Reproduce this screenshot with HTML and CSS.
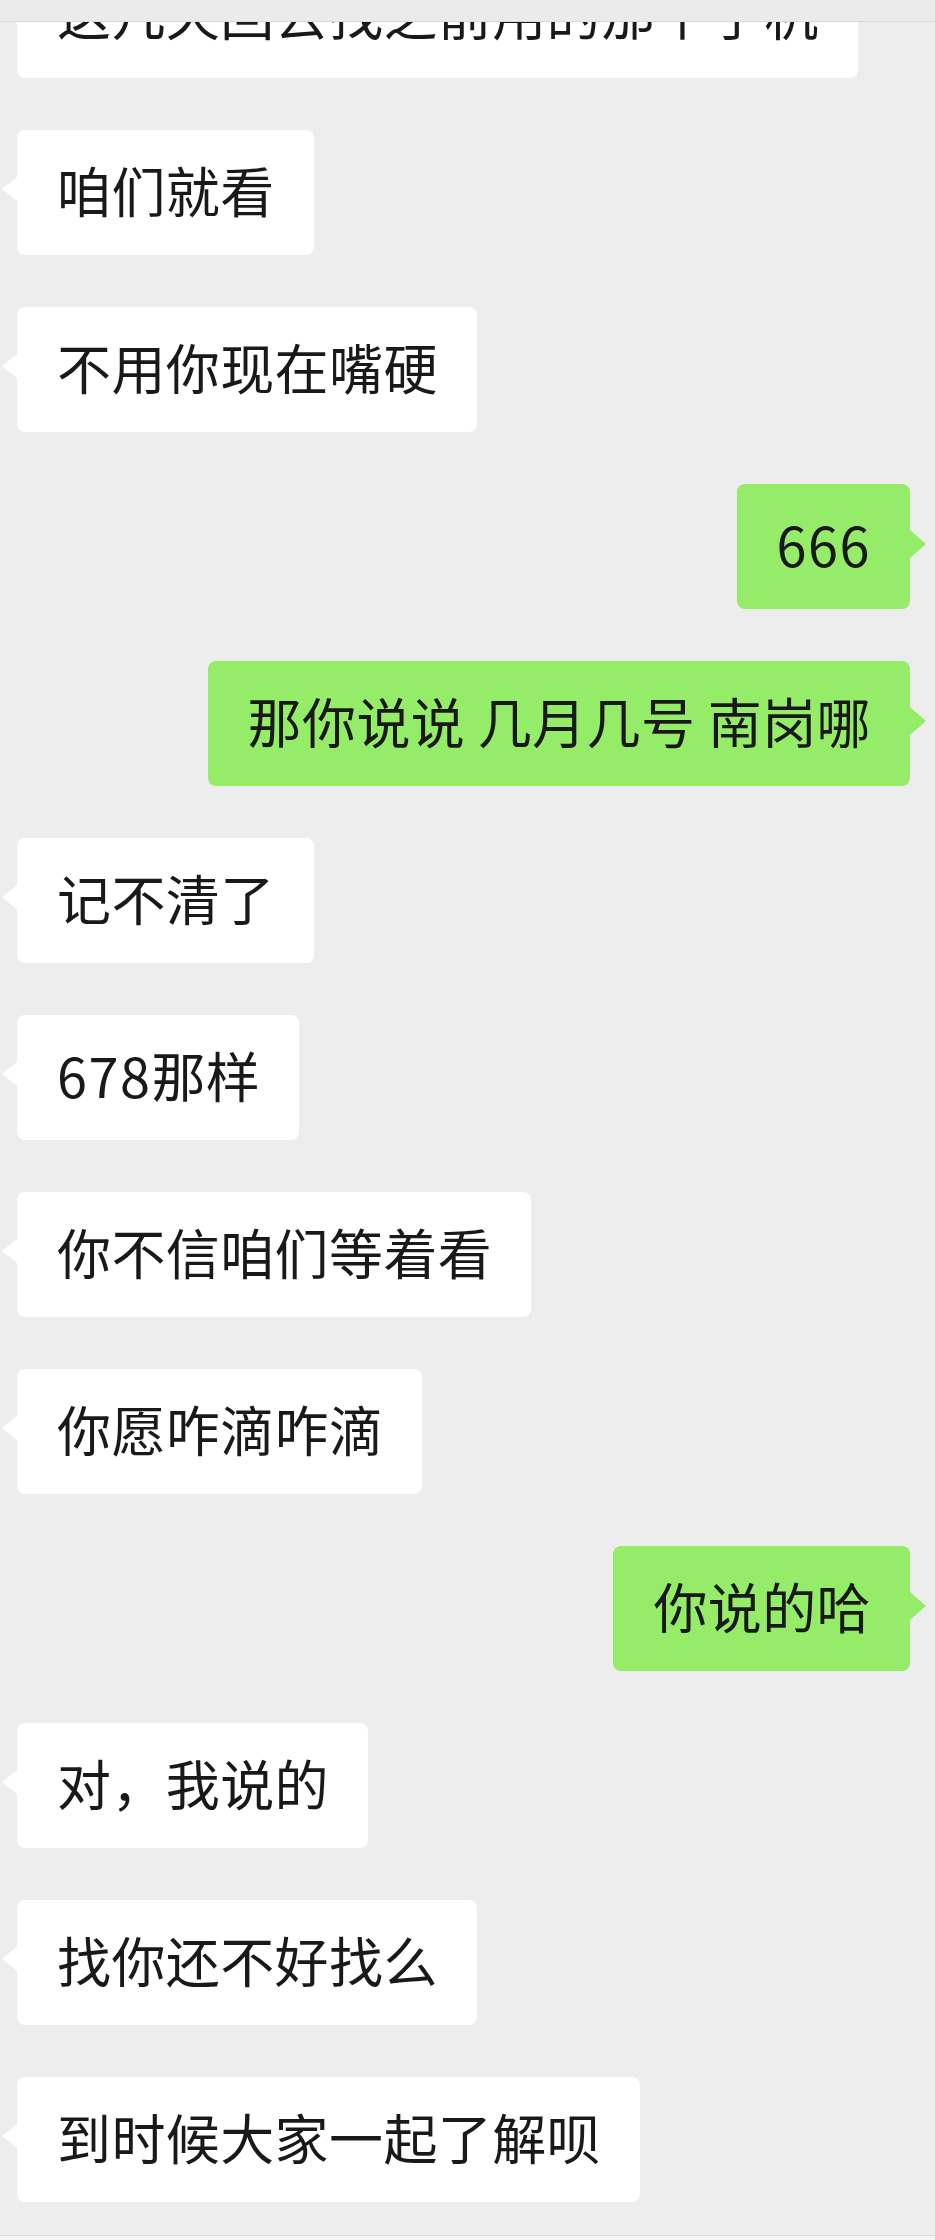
FILE: index.html
```html
<!DOCTYPE html>
<html lang="zh-CN">
<head>
    <meta charset="UTF-8">
    <title>聊天记录</title>
    <link rel="stylesheet" href="styles.css">
</head>
<body>
    <div class="topbar"></div>
    <div class="chat">
        <div class="row left"><div class="bubble">这几天回去找之前用的那个手机</div></div>
        <div class="row left"><div class="bubble">咱们就看</div></div>
        <div class="row left"><div class="bubble">不用你现在嘴硬</div></div>
        <div class="row right"><div class="bubble"><span class="num">666</span></div></div>
        <div class="row right"><div class="bubble">那你说说 几月几号 南岗哪</div></div>
        <div class="row left"><div class="bubble">记不清了</div></div>
        <div class="row left"><div class="bubble"><span class="num">678</span>那样</div></div>
        <div class="row left"><div class="bubble">你不信咱们等着看</div></div>
        <div class="row left"><div class="bubble">你愿咋滴咋滴</div></div>
        <div class="row right"><div class="bubble">你说的哈</div></div>
        <div class="row left"><div class="bubble">对，我说的</div></div>
        <div class="row left"><div class="bubble">找你还不好找么</div></div>
        <div class="row left"><div class="bubble">到时候大家一起了解呗</div></div>
    </div>
    <div class="bottom"></div>
</body>
</html>
```

FILE: styles.css
```css
* {
    margin: 0;
    padding: 0;
    box-sizing: border-box;
}
body {
    width: 935px;
    height: 2240px;
    overflow: hidden;
    background-color: #ededed;
    font-family: "Noto Sans CJK SC", "Noto Sans", sans-serif;
    color: #191919;
}
.topbar {
    position: absolute;
    top: 0;
    left: 0;
    width: 935px;
    height: 22px;
    background-color: #ebebeb;
    border-bottom: 1px solid #d9d9d9;
    z-index: 2;
}
.chat {
    display: flex;
    flex-direction: column;
    gap: 52px;
    margin-top: -47px;
}
.row {
    display: flex;
}
.row.left {
    justify-content: flex-start;
    padding-left: 17px;
}
.row.right {
    justify-content: flex-end;
    padding-right: 25px;
}
.bubble {
    position: relative;
    height: 125px;
    padding: 0 39px 0 40px;
    line-height: 119px;
    font-size: 54px;
    letter-spacing: 0.4px;
    white-space: pre;
    border-radius: 8px;
    background-color: #ffffff;
}
.num {
    letter-spacing: 1.5px;
}
.left .bubble::before {
    content: "";
    position: absolute;
    left: -15px;
    top: 47px;
    border-top: 12px solid transparent;
    border-bottom: 12px solid transparent;
    border-right: 15px solid #ffffff;
}
.right .bubble {
    background-color: #95ec69;
}
.right .bubble::after {
    content: "";
    position: absolute;
    right: -16px;
    top: 46px;
    border-top: 14px solid transparent;
    border-bottom: 14px solid transparent;
    border-left: 16px solid #95ec69;
}
.bottom {
    position: absolute;
    left: 0;
    top: 2235px;
    width: 935px;
    height: 5px;
    background-color: #f4f4f4;
    border-top: 1px solid #dcdcdc;
}
```
